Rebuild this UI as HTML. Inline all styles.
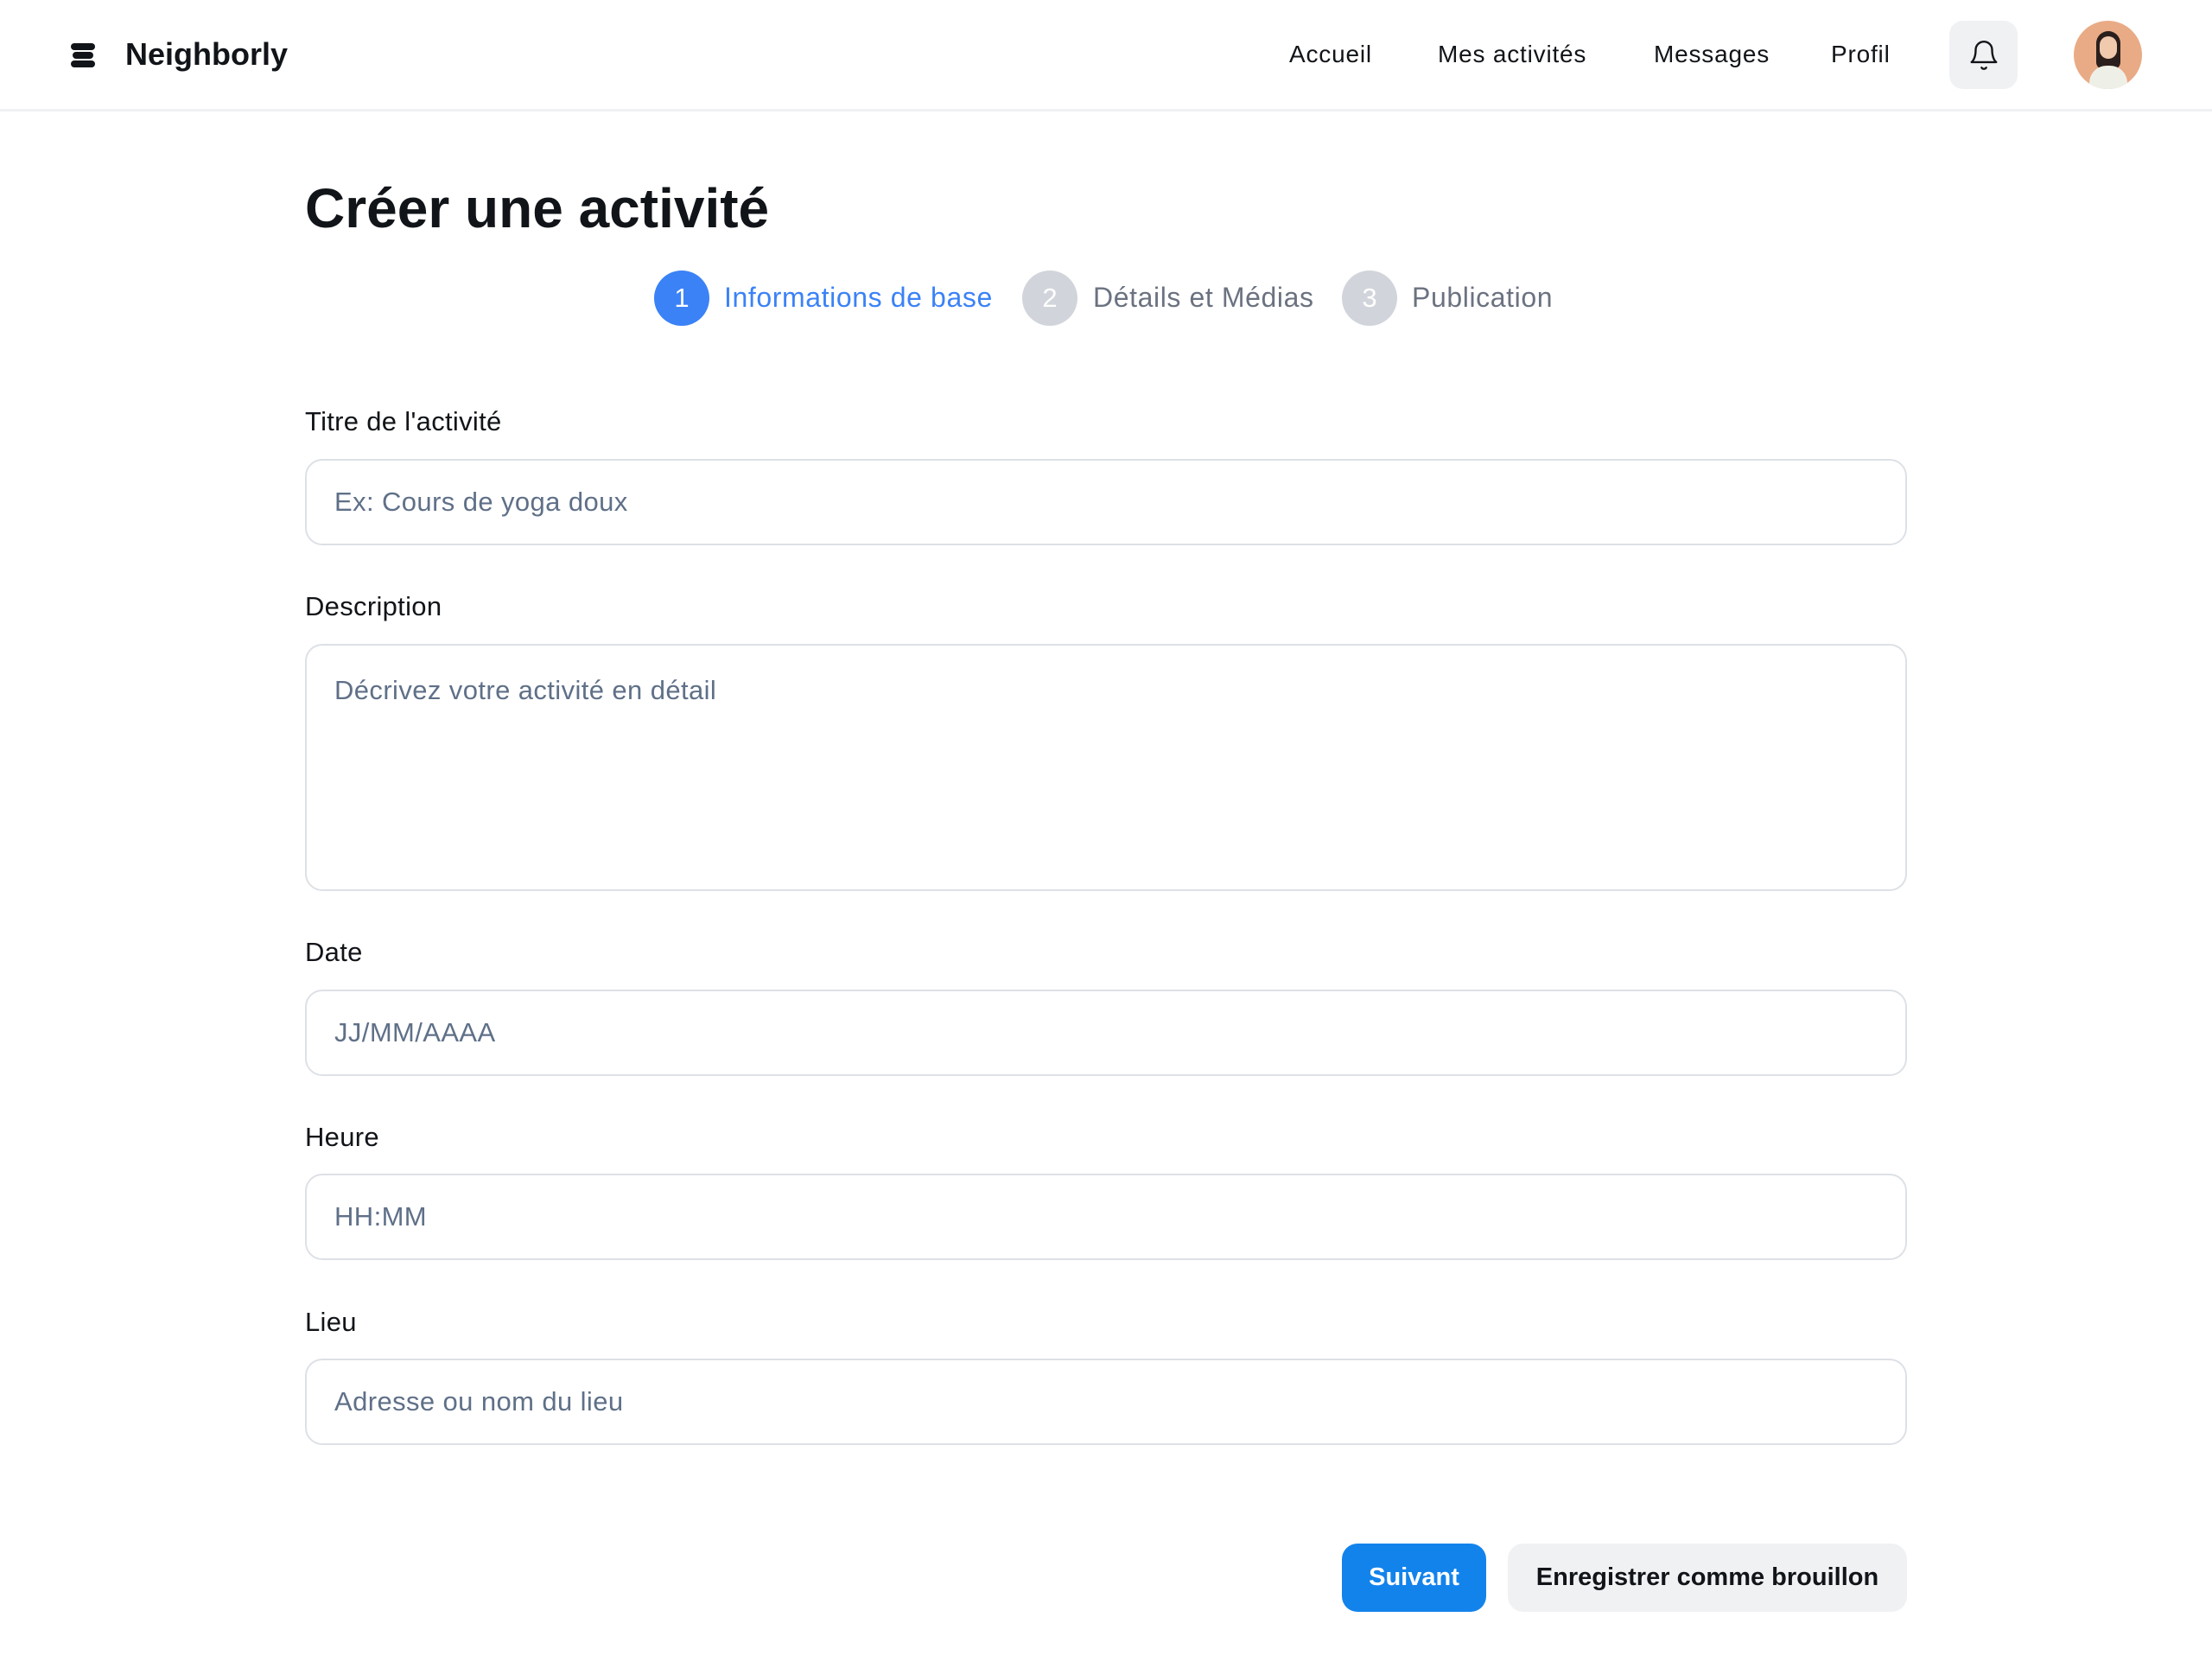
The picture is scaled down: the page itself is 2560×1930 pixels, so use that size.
<!DOCTYPE html>
<html><head><meta charset="utf-8"><style>
*{box-sizing:border-box;margin:0;padding:0}
body{width:2560px;height:1930px;background:#fff;font-family:"Liberation Sans",sans-serif;color:#111418;position:relative;overflow:hidden}
.a{position:absolute}
.hdr{left:0;top:0;width:2560px;height:129px;border-bottom:3px solid #f0f1f3}
.nav{font-size:28px;color:#111418;top:47px;letter-spacing:0.8px}
.lbl{font-size:31px;left:353px;color:#111418;letter-spacing:0.3px}
.inp{left:353px;width:1854px;height:100px;border:2px solid #dde1e6;border-radius:20px}
.ph{font-size:31px;color:#5f7088;left:32px;position:absolute;letter-spacing:0.4px}
.circ{width:64px;height:64px;border-radius:50%;top:313px;color:#fff;font-size:31px;text-align:center;line-height:64px}
.st{font-size:32px;top:326px;letter-spacing:0.6px}
</style></head><body>
<div class="a hdr"></div>
<svg class="a" style="left:80px;top:48px" width="32" height="32" viewBox="0 0 32 32"><rect x="2" y="2" width="28" height="8" rx="4" fill="#111418"/><rect x="4" y="12" width="24" height="8" rx="4" fill="#111418"/><rect x="2" y="22" width="28" height="8" rx="4" fill="#111418"/></svg>
<div class="a" style="left:145px;top:42px;font-size:36px;font-weight:bold">Neighborly</div>
<div class="a nav" style="left:1492px">Accueil</div>
<div class="a nav" style="left:1664px">Mes activités</div>
<div class="a nav" style="left:1914px">Messages</div>
<div class="a nav" style="left:2119px">Profil</div>
<div class="a" style="left:2256px;top:24px;width:79px;height:79px;border-radius:16px;background:#f0f1f3"></div>
<svg class="a" style="left:2277px;top:45px" width="38" height="38" viewBox="0 0 24 24" fill="none" stroke="#111418" stroke-width="1.5" stroke-linecap="round" stroke-linejoin="round"><path d="M18 8A6 6 0 0 0 6 8c0 7-3 9-3 9h18s-3-2-3-9"/><path d="M13.7 21a2 2 0 0 1-3.4 0"/></svg>
<div class="a" style="left:2400px;top:24px;width:79px;height:79px;border-radius:50%;background:#e9ab85;overflow:hidden">
<div class="a" style="left:26px;top:12px;width:28px;height:44px;border-radius:14px 14px 8px 8px;background:#2a1f1c"></div>
<div class="a" style="left:30px;top:18px;width:20px;height:26px;border-radius:10px;background:#f1c9ad"></div>
<div class="a" style="left:18px;top:52px;width:44px;height:40px;border-radius:20px 20px 0 0;background:#eef0e8"></div>
</div>
<div class="a" style="left:353px;top:204px;font-size:64px;font-weight:bold">Créer une activité</div>
<div class="a circ" style="left:757px;background:#3b82f6">1</div>
<div class="a st" style="left:838px;color:#3b82f6">Informations de base</div>
<div class="a circ" style="left:1183px;background:#d1d5db">2</div>
<div class="a st" style="left:1265px;color:#6b7280">Détails et Médias</div>
<div class="a circ" style="left:1553px;background:#d1d5db">3</div>
<div class="a st" style="left:1634px;color:#6b7280">Publication</div>

<div class="a lbl" style="top:470px">Titre de l'activité</div>
<div class="a inp" style="top:531px"><span class="ph" style="top:30px">Ex: Cours de yoga doux</span></div>
<div class="a lbl" style="top:684px">Description</div>
<div class="a inp" style="top:745px;height:286px"><span class="ph" style="top:34px">Décrivez votre activité en détail</span></div>
<div class="a lbl" style="top:1084px">Date</div>
<div class="a inp" style="top:1145px"><span class="ph" style="top:30px">JJ/MM/AAAA</span></div>
<div class="a lbl" style="top:1298px">Heure</div>
<div class="a inp" style="top:1358px"><span class="ph" style="top:30px">HH:MM</span></div>
<div class="a lbl" style="top:1512px">Lieu</div>
<div class="a inp" style="top:1572px"><span class="ph" style="top:30px">Adresse ou nom du lieu</span></div>

<div class="a" style="left:1553px;top:1786px;width:167px;height:79px;border-radius:18px;background:#1383ec;color:#fff;font-size:29px;font-weight:bold;text-align:center;line-height:79px">Suivant</div>
<div class="a" style="left:1745px;top:1786px;width:462px;height:79px;border-radius:18px;background:#f0f1f3;color:#111418;font-size:29px;font-weight:bold;text-align:center;line-height:79px">Enregistrer comme brouillon</div>
</body></html>
